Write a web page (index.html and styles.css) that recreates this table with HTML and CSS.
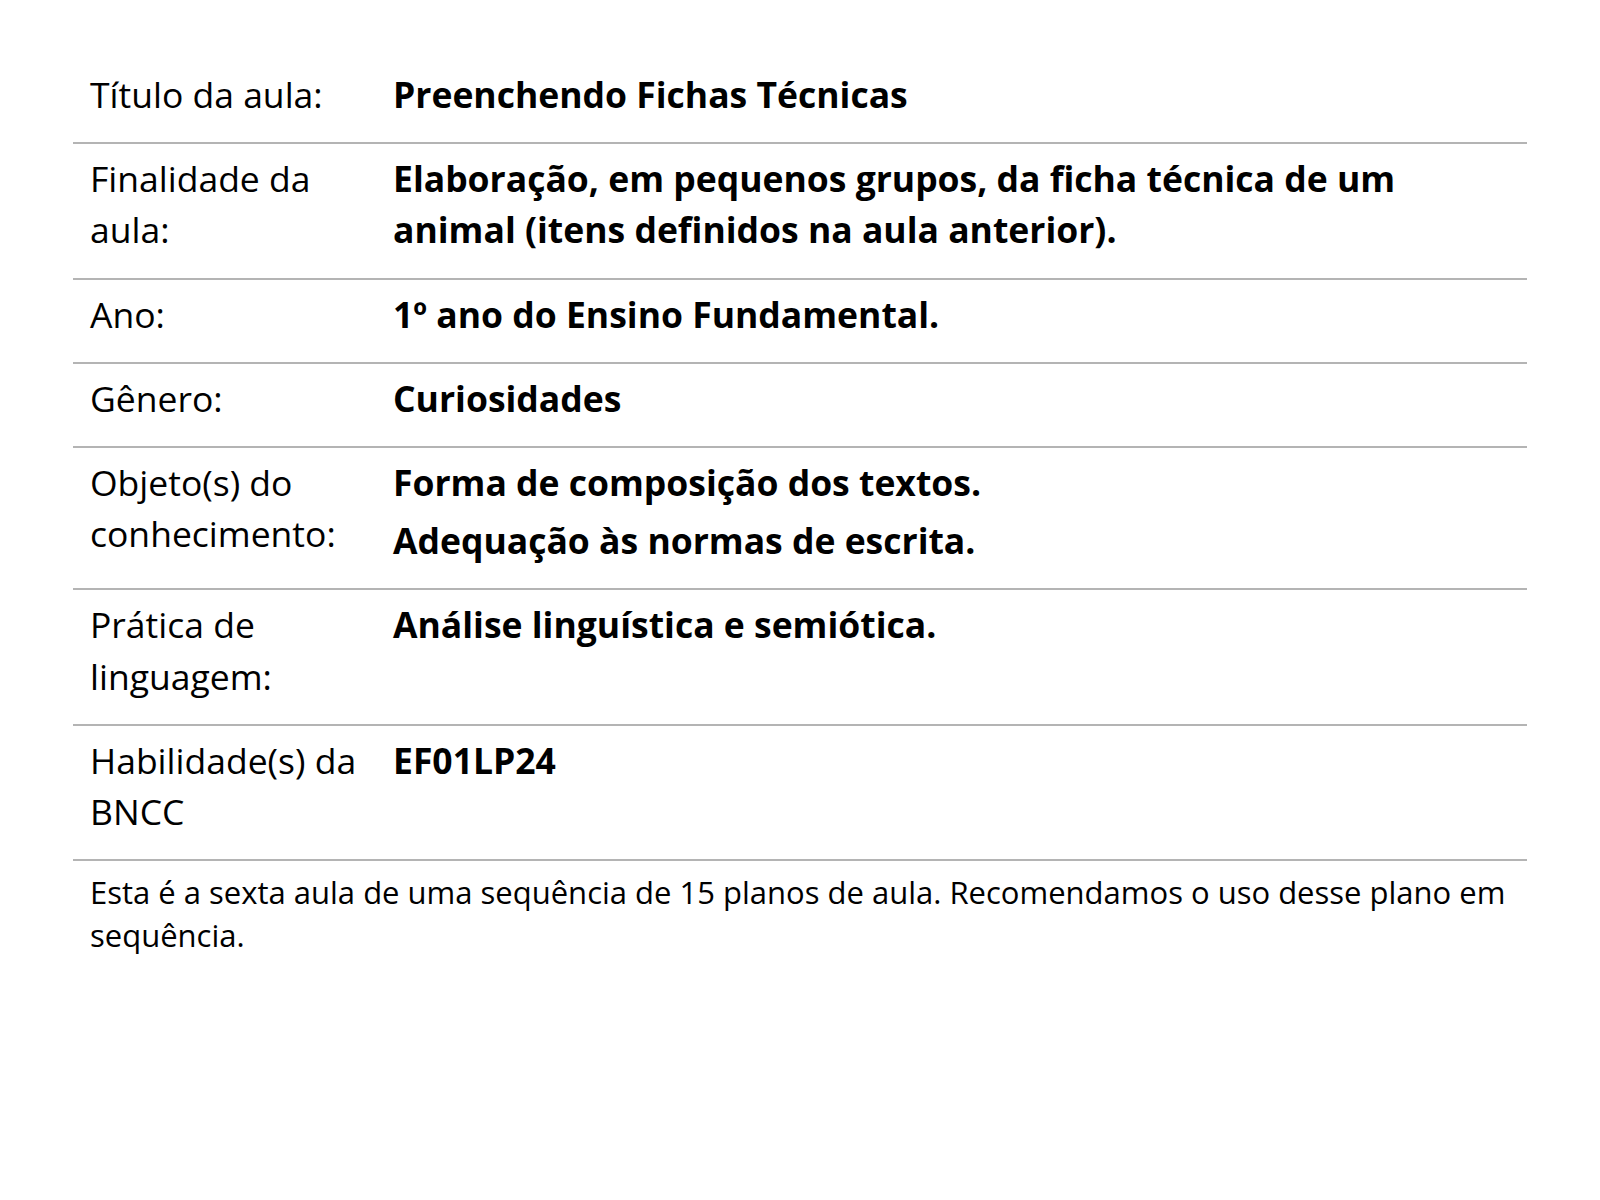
FILE: index.html
```html
<!DOCTYPE html>
<html lang="pt-BR">
<head>
<meta charset="utf-8">
<title>Plano de aula</title>
<link rel="stylesheet" href="styles.css">
</head>
<body>
<div class="page">
  <table class="info">
    <tr>
      <th>Título da aula:</th>
      <td><p>Preenchendo Fichas Técnicas</p></td>
    </tr>
    <tr>
      <th>Finalidade da aula:</th>
      <td><p>Elaboração, em pequenos grupos, da ficha técnica de um animal (itens definidos na aula anterior).</p></td>
    </tr>
    <tr>
      <th>Ano:</th>
      <td><p>1º ano do Ensino Fundamental.</p></td>
    </tr>
    <tr>
      <th>Gênero:</th>
      <td><p>Curiosidades</p></td>
    </tr>
    <tr>
      <th>Objeto(s) do conhecimento:</th>
      <td><p>Forma de composição dos textos.</p><p>Adequação às normas de escrita.</p></td>
    </tr>
    <tr>
      <th>Prática de linguagem:</th>
      <td><p>Análise linguística e semiótica.</p></td>
    </tr>
    <tr>
      <th>Habilidade(s) da BNCC</th>
      <td><p>EF01LP24</p></td>
    </tr>
  </table>
  <p class="note">Esta é a sexta aula de uma sequência de 15 planos de aula. Recomendamos o uso desse plano em sequência.</p>
</div>
</body>
</html>
```

FILE: styles.css
```css
html, body {
  margin: 0;
  padding: 0;
  background: #ffffff;
}

body {
  font-family: "Open Sans", "Noto Sans", sans-serif;
  color: #000000;
}

.page {
  padding: 60px 73px 0 73px;
}

.info {
  width: 100%;
  border-collapse: collapse;
}

.info tr {
  border-bottom: 2px solid #b4b4b4;
}

.info th {
  width: 269px;
  text-align: left;
  vertical-align: top;
  font-weight: 400;
  font-size: 35.5px;
  line-height: 51.2px;
  padding: 9px 17px 22px 17px;
}

.info td {
  vertical-align: top;
  font-weight: 700;
  font-size: 35.5px;
  line-height: 51.2px;
  padding: 9px 17px 22px 17px;
}

.info td p {
  margin: 0;
}

.info td p + p {
  margin-top: 7px;
}

.note {
  margin: 0;
  padding: 10px 17px;
  font-size: 31px;
  line-height: 43.2px;
}
```
